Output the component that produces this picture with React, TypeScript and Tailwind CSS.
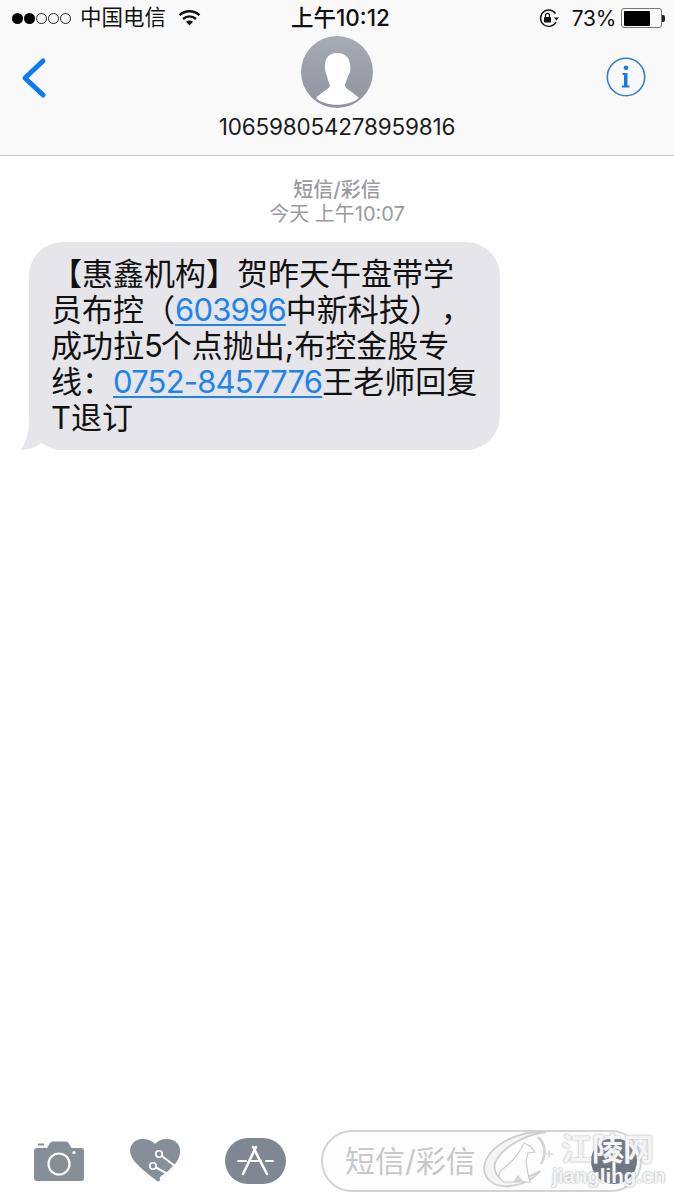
import React from "react";

const cjk = "font-['Inter','Noto_Sans_CJK_SC',sans-serif]";
const link = "text-[#1f84ea] underline decoration-2 underline-offset-[3px] tracking-[-0.8px]";

const StatusBar = () => (
  <div className="relative flex h-[36px] items-center pl-[12px] pr-[9px] text-[21.500px] text-[#111]">
    <div className="flex items-center gap-[1px]">
      <span className="h-[11px] w-[11px] rounded-full bg-black" />
      <span className="h-[11px] w-[11px] rounded-full bg-black" />
      <span className="h-[11px] w-[11px] rounded-full border border-[#222]" />
      <span className="h-[11px] w-[11px] rounded-full border border-[#222]" />
      <span className="h-[11px] w-[11px] rounded-full border border-[#222]" />
    </div>
    <span className="ml-[9px] leading-none">中国电信</span>
    <svg className="ml-[12px]" width="23" height="16" viewBox="0 0 23 16" fill="none" stroke="#111" strokeWidth="2.4">
      <path d="M1.5 5.2C7.5 0 15.5 0 21.5 5.2" />
      <path d="M5 9C9 5.6 14 5.6 18 9" />
      <path d="M11.5 15.5 L8 11.8C10 10 13 10 15 11.8Z" fill="#111" stroke="none" />
    </svg>
    <span className="absolute left-[291px] top-[6px] text-[22.500px] font-medium leading-[24px]">上午10:12</span>
    <div className="ml-auto flex items-center">
      <svg width="22" height="20" viewBox="0 0 22 20" fill="none">
        <path d="M17.5 5.5A8.2 8.2 0 1 0 18 14" stroke="#111" strokeWidth="1.4" />
        <path d="M16 9.5h5l-2.5 3z" fill="#111" />
        <rect x="6" y="9" width="7" height="5.5" rx="0.8" fill="#111" />
        <path d="M7.5 9V7.4a2 2 0 0 1 4 0V9" stroke="#111" strokeWidth="1.2" />
      </svg>
      <span className="ml-[12px] text-[21px] leading-none tracking-[-0.3px]">73%</span>
      <div className="ml-[5px] flex h-[20px] w-[41px] items-center rounded-[3px] border border-[#777] p-[1.5px]">
        <div className="h-full w-[73%] rounded-[1px] bg-black" />
      </div>
      <div className="h-[7px] w-[3px] rounded-r-[2px] bg-[#222]" />
    </div>
  </div>
);

const Header = () => (
  <div className={`${cjk} h-[156px] border-b border-[#c8c8ca] bg-[#f9f9f9]`}>
    <StatusBar />
    <div className="relative flex flex-col items-center">
      <svg className="absolute left-[20px] top-[21px]" width="28" height="42" viewBox="0 0 28 42" fill="none">
        <path d="M23 4L5 21L23 38" stroke="#0a7bf5" strokeWidth="5" strokeLinecap="round" strokeLinejoin="round" />
      </svg>
      <svg className="absolute left-[606px] top-[21px]" width="40" height="40" viewBox="0 0 40 40" fill="none">
        <circle cx="20" cy="20" r="18.7" stroke="#2f7fd2" strokeWidth="1.6" />
        <circle cx="20" cy="10.8" r="2.3" fill="#1a78e0" />
        <path d="M16.500 16h5v12.500h2V30.500h-7.500V28.500h2V18h-1.500z" fill="#1a78e0" />
      </svg>
      <svg width="72" height="72" viewBox="0 0 72 72">
        <defs>
          <linearGradient id="avatarFill" x1="0" y1="0" x2="0" y2="1">
            <stop offset="0" stopColor="#a6aab3" />
            <stop offset="1" stopColor="#8f949f" />
          </linearGradient>
        </defs>
        <circle cx="36" cy="36" r="36" fill="url(#avatarFill)" />
        <path
          d="M36 17C28 17 24 22 24 30C24 36 25 38 26 40C27 46 29 48 29 50C27 54 20 56 15 62C24 71 48 71 58 62C52 56 46 54 44 50C44 47 46 44 47 40C49 37 50 34 49 28C48 21 44 17 36 17Z"
          fill="#fff"
        />
      </svg>
      <span className="mt-[6px] text-[22.500px] leading-[26px] tracking-[-0.2px] text-[#1c1c1c]">106598054278959816</span>
    </div>
  </div>
);

const Bubble = () => (
  <div className="relative ml-[29px] mt-[16px] w-[471px] rounded-[34px] bg-[#e5e5ea] pb-[14px] pl-[22px] pr-[10px] pt-[14px] text-[31px] leading-[36px] text-[#111]">
    <svg className="absolute bottom-0 left-[-10px]" width="36" height="30" viewBox="0 0 36 30">
      <path d="M10 0C10 14 6 26 1 30C8 30 16 28 22 23L34 10Z" fill="#e5e5ea" />
    </svg>
    <div className="relative whitespace-nowrap [text-spacing-trim:space-all]">
      【惠鑫机构】贺昨天午盘带学
      <br />
      员布控（<span className={link}>603996</span>中新科技），
      <br />
      成功拉<span className="tracking-[-2px]">5</span>个点抛出;布控金股专
      <br />
      线：<span className={link}>0752-8457776</span>王老师回复
      <br />
      T退订
    </div>
  </div>
);

const Toolbar = () => (
  <div className="mb-[8px] mt-auto flex items-center pl-[33px]">
    <svg width="52" height="42" viewBox="0 0 52 42">
      <path d="M1 11a3 3 0 0 1 3-3h10l3-5a3 3 0 0 1 2.500-1.500H33a3 3 0 0 1 2.500 1.500l3 5H48a3 3 0 0 1 3 3v27a3 3 0 0 1-3 3H4a3 3 0 0 1-3-3z" fill="#868e98" />
      <rect x="5" y="3.500" width="6" height="2" fill="#868e98" />
      <circle cx="26" cy="24" r="10.500" fill="none" stroke="#fff" strokeWidth="2.200" />
      <circle cx="41" cy="12.500" r="1.600" fill="#fff" />
    </svg>
    <svg className="ml-[45px]" width="52" height="44" viewBox="0 0 52 44">
      <path d="M25 5C20 -1 8 -2 3 4C-2 10 0 17 5 23C12 31 20 36 27 42C30 43 31 41 29.500 39L31 37L37 33L45 25C50 19 52 11 48 5C43 -1 31 -2 25 5Z" fill="#868e98" />
      <path d="M29 15L45 27" stroke="#fff" strokeWidth="2" />
      <path d="M23 27L38 35" stroke="#fff" strokeWidth="2" />
      <circle cx="29" cy="15" r="3.200" fill="#868e98" stroke="#fff" strokeWidth="1.600" />
      <circle cx="23" cy="27" r="3.200" fill="#868e98" stroke="#fff" strokeWidth="1.600" />
    </svg>
    <div className="ml-[43px] flex h-[46px] w-[61px] items-center justify-center rounded-[23px] bg-[#7f8792]">
      <svg width="61" height="46" viewBox="0 0 61 46" fill="none" stroke="#fff" strokeWidth="2.600" strokeLinecap="round">
        <path d="M31 9L18 36" />
        <path d="M28 9L42 36" />
        <path d="M13 23H21M26 23H36M41 23H48" strokeWidth="1.800" />
      </svg>
    </div>
    <div className="relative ml-[35px] flex h-[62px] w-[321px] items-center rounded-[31px] border-2 border-[#d4d4d6] bg-[#fdfdfd] pl-[22px] text-[30px] text-[#c8c8ca]">
      短信/彩信
      <div className="absolute right-[3px] top-[6px] flex h-[46px] w-[46px] items-center justify-center rounded-full bg-[#6f7683]">
        <svg width="24" height="30" viewBox="0 0 24 30" fill="none" stroke="#fff" strokeWidth="3">
          <path d="M12 29V3" />
          <path d="M3 12L12 3L21 12" />
        </svg>
      </div>
    </div>
  </div>
);

const Watermark = () => (
  <div className="absolute left-[480px] top-[1128px] h-[66px] w-[190px]">
    <svg className="absolute left-0 top-0" width="76" height="66" viewBox="0 0 76 66" fill="none">
      <path d="M66 4C44 2 12 14 5 35C1 50 14 60 30 58C44 57 54 50 60 43C52 48 40 52 28 52C18 52 13 44 15 35C22 18 48 6 66 4Z" fill="#f4f4f5" stroke="#cfcfd1" strokeWidth="1.800" />
      <path d="M58 9C65 16 67 25 61 36" stroke="#d3d3d5" strokeWidth="2.500" />
      <path d="M44 15L50 18L55 24L48 25L46 33L48 46L50 54L24 54C17 50 18 44 24 40C32 34 38 28 44 15Z" fill="#fcfcfc" stroke="#cbcbcd" strokeWidth="1.200" />
      <path d="M38 47L44 54H33Z" fill="#d5d5d7" />
      <path d="M69 22V30M65 26H73" stroke="#dcdcde" strokeWidth="1.500" />
    </svg>
    <span className="absolute left-[81px] top-[6px] whitespace-nowrap text-[31px] font-bold leading-[30px] text-[#f4f4f5] [text-shadow:0_0_2px_#9da0a6]">
      江陵网
    </span>
    <span className="absolute left-[72px] top-[38px] whitespace-nowrap font-['Liberation_Sans',sans-serif] text-[20.500px] font-bold leading-[20px] text-[#f4f4f5] [text-shadow:0_0_2px_#8d9096]">
      jiangling.cn
    </span>
  </div>
);

export default function App() {
  return (
    <div className={`${cjk} relative flex h-[1200px] w-[674px] flex-col overflow-hidden bg-white`}>
      <Header />
      <div className="mt-[22px] flex flex-col items-center text-[20px] leading-[24px] text-[#9a9a9f]">
        <span className="font-medium">短信/彩信</span>
        <span>今天 上午10:07</span>
      </div>
      <Bubble />
      <Toolbar />
      <Watermark />
    </div>
  );
}
